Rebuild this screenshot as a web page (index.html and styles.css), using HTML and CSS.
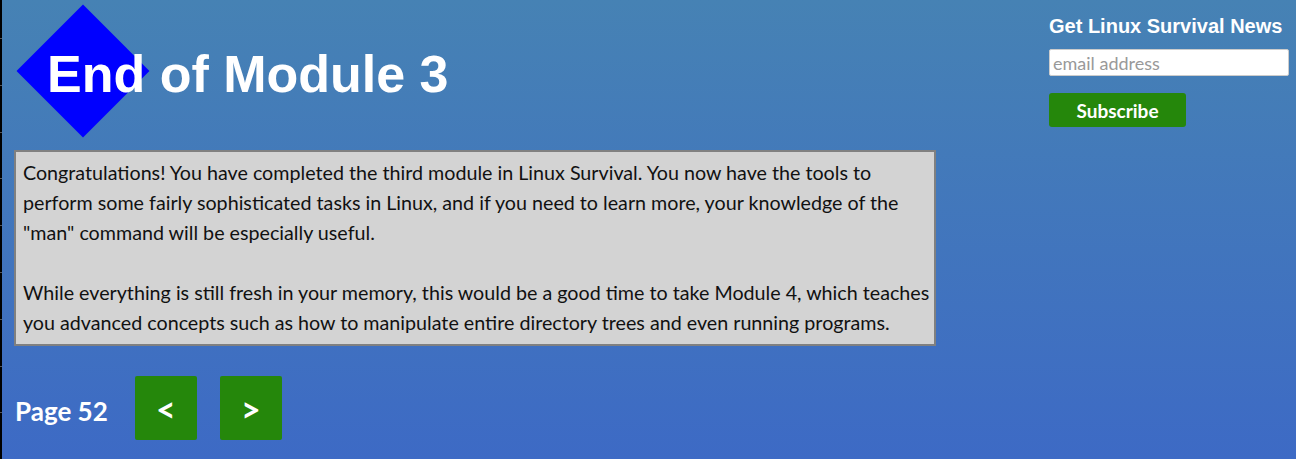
FILE: index.html
```html
<!DOCTYPE html>
<html>
<head>
<meta charset="utf-8">
<link rel="stylesheet" href="styles.css">
</head>
<body>
<div class="ruler"></div>
<div class="page">
  <main class="main">
    <header class="header">
      <div class="diamond"></div>
      <h1 class="title">End of Module 3</h1>
    </header>
    <section class="box">
      <p class="box-text">Congratulations! You have completed the third module in Linux Survival. You now have the tools to perform some fairly sophisticated tasks in Linux, and if you need to learn more, your knowledge of the "man" command will be especially useful.<br><br>While everything is still fresh in your memory, this would be a good time to take Module 4, which teaches you advanced concepts such as how to manipulate entire directory trees and even running programs.</p>
    </section>
    <nav class="pager">
      <span class="page-label">Page 52</span>
      <a class="nav-btn">&lt;</a>
      <a class="nav-btn next">&gt;</a>
    </nav>
  </main>
  <aside class="side">
    <h2 class="side-title">Get Linux Survival News</h2>
    <input class="email" type="text" placeholder="email address">
    <button class="subscribe">Subscribe</button>
  </aside>
</div>
</body>
</html>
```

FILE: styles.css
```css
html, body {
  margin: 0;
  padding: 0;
  height: 100%;
}
body {
  background: linear-gradient(180deg, #4682b4 0%, #3d6ac5 100%);
  font-family: Lato, "Open Sans", sans-serif;
  overflow: hidden;
  position: relative;
}
.ruler {
  position: absolute;
  left: 0;
  top: 0;
  width: 2px;
  height: 100%;
  background-color: #000;
  background-image: repeating-linear-gradient(180deg, transparent 0, transparent 38px, #555 38px, #555 39px, transparent 39px, transparent 46.8px);
}
.page {
  display: flex;
  align-items: flex-start;
}
.main {
  margin-left: 14px;
  width: 922px;
}
.header {
  position: relative;
  padding-top: 44px;
  height: 60px;
}
.diamond {
  position: absolute;
  left: 21.5px;
  top: 23.5px;
  width: 94px;
  height: 94px;
  background: #0000ff;
  transform: rotate(45deg);
}
.title {
  position: relative;
  margin: 0 0 0 33px;
  font-family: "Liberation Sans", Arial, sans-serif;
  font-weight: bold;
  font-size: 52px;
  line-height: 60px;
  color: #fff;
}
.box {
  margin-top: 46px;
  background: #d3d3d3;
  border: 2px solid #808080;
  padding: 6px 0 6px 7px;
}
.box-text {
  margin: 0;
  font-size: 19.7px;
  line-height: 30px;
  color: #111;
}
.pager {
  display: flex;
  align-items: flex-end;
  margin-top: 30px;
}
.page-label {
  font-weight: bold;
  font-size: 26px;
  line-height: 31px;
  color: #fff;
  margin-left: 1px;
  padding-bottom: 13px;
}
.nav-btn {
  display: flex;
  align-items: center;
  justify-content: center;
  width: 62px;
  height: 64px;
  margin-left: 27px;
  background: #25870b;
  border-radius: 2px;
  color: #fff;
  font-weight: bold;
  font-size: 34px;
}
.nav-btn.next {
  margin-left: 23px;
}
.side {
  margin-left: 113px;
  width: 240px;
  display: flex;
  flex-direction: column;
  align-items: flex-start;
}
.side-title {
  margin: 15px 0 0 0;
  font-family: "Liberation Sans", Arial, sans-serif;
  font-weight: bold;
  font-size: 20px;
  line-height: 23px;
  color: #fff;
  white-space: nowrap;
}
.email {
  box-sizing: border-box;
  margin-top: 11px;
  width: 240px;
  height: 27px;
  padding: 0 3px;
  border: 1px solid #ccc;
  border-radius: 2px;
  font-family: Lato, sans-serif;
  font-size: 18px;
  color: #333;
  background: #fff;
}
.email::placeholder {
  color: #999;
}
.subscribe {
  margin-top: 17px;
  width: 137px;
  height: 34px;
  border: none;
  border-radius: 3px;
  background: #25870b;
  color: #fff;
  font-family: Lato, sans-serif;
  font-weight: bold;
  font-size: 19px;
  padding: 0;
}
```
